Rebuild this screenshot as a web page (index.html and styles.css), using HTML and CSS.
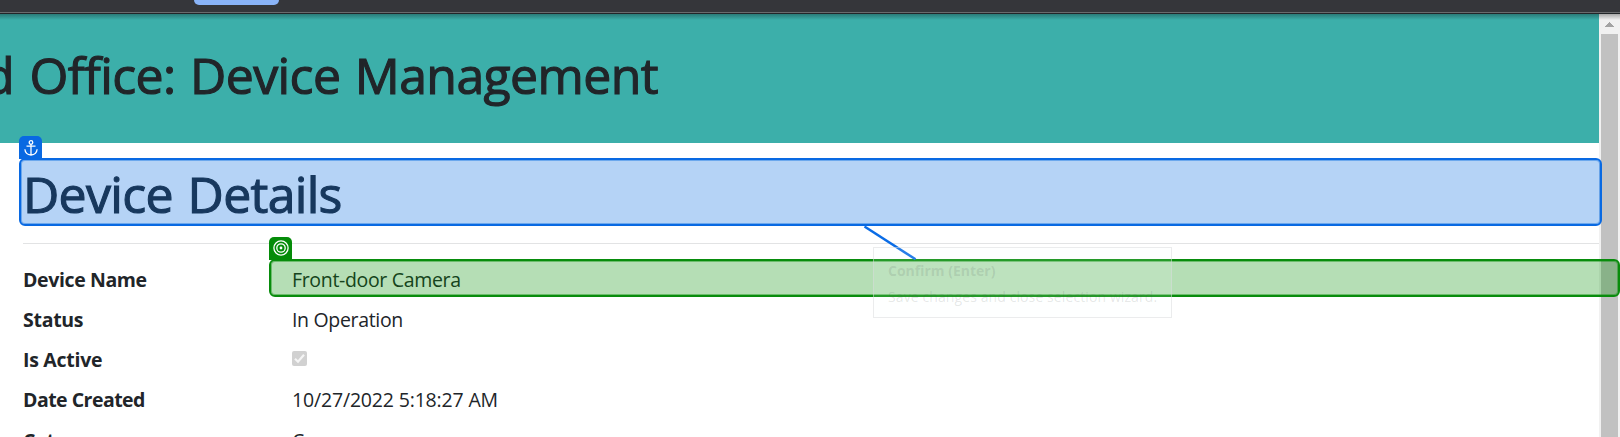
FILE: index.html
```
<!DOCTYPE html>
<html lang="en">
<head>
<meta charset="utf-8">
<title>Device Management</title>
<link rel="stylesheet" href="styles.css">
</head>
<body>
<div class="toolbar"><div class="toolbar-tab"></div></div>
<div class="viewport">
  <div class="page">
    <header class="banner"><h1 class="banner-title"><span class="banner-lead">d</span>Office: Device Management</h1></header>
    <main class="content">
      <h1 class="heading">Device Details</h1>
      <dl class="details">
        <dt>Device Name</dt><dd>Front-door Camera</dd>
        <dt class="short">Status</dt><dd>In Operation</dd>
        <dt class="short">Is Active</dt>
        <dd><svg class="check" viewBox="0 0 15 15"><rect width="15" height="15" rx="2" fill="#d1d1d1"/><path d="M3 7.7 6 10.7 12 3.8" fill="none" stroke="#f5f5f5" stroke-width="2.2"/></svg></dd>
        <dt class="date-label">Date Created</dt><dd class="date-value">10/27/2022 5:18:27 AM</dd>
        <dt class="last">Category</dt><dd class="last">Camera</dd>
      </dl>
    </main>
  </div>
  <div class="scrollbar">
    <svg class="scroll-arrow" viewBox="0 0 9 5" shape-rendering="crispEdges"><path d="M0 5 4.5 0 9 5Z" fill="#a3a3a3"/></svg>
    <div class="scroll-thumb"></div>
  </div>
</div>
<div class="toolbar-shadow"></div>
<div class="marker marker-anchor"></div>
<div class="badge badge-anchor">
  <svg class="anchor-icon" viewBox="0 0 14 16" fill="none" stroke="#fff" stroke-width="1.3"><circle cx="7" cy="2.5" r="1.8"/><path d="M7 4.3V15M2.5 6.1h9M.9 9.3C1.2 13 4 14.8 7 15c3-.2 5.8-2 6.1-5.7"/></svg>
</div>
<div class="marker marker-target"></div>
<div class="badge badge-target">
  <svg class="target-icon" viewBox="0 0 16 16" fill="none" stroke="#fff" stroke-width="1.3"><circle cx="8" cy="8" r="7.1"/><circle cx="8" cy="8" r="4.2"/><circle cx="8" cy="8" r="1.4" fill="#fff" stroke="none"/></svg>
</div>
<svg class="connector" viewBox="0 0 60 40"><path d="M4.500 3.500 55.500 36.300" stroke="#0a6ce6" stroke-width="2.500"/></svg>
<aside class="tooltip"><strong>Confirm (Enter)</strong><span class="tooltip-text">Save changes and close selection wizard.</span></aside>
</body>
</html>
```

FILE: styles.css
```
* { box-sizing: border-box; }
body {
  margin: 0;
  width: 1620px;
  height: 437px;
  overflow: hidden;
  position: relative;
  display: flex;
  flex-direction: column;
  background: #fff;
  color: #212529;
  font-family: "Open Sans", "Noto Sans", sans-serif;
}
h1, dl, dd { margin: 0; }
.toolbar {
  flex: none;
  height: 14px;
  padding-left: 194px;
  background: #35363a;
  border-bottom: 1px solid #222629;
  box-shadow: inset 0 -1px #6a6b6d;
}
.toolbar-tab { width: 85px; height: 5px; border-radius: 0 0 5px 5px; background: #8ab4f8; }
.toolbar-shadow {
  position: absolute;
  top: 14px;
  left: 0;
  width: 100%;
  height: 6px;
  background: linear-gradient(rgba(0,0,0,.3), rgba(0,0,0,0));
}
.viewport { flex: 1; min-height: 0; display: flex; }
.page { flex: 1; min-width: 0; overflow: hidden; }
.banner { height: 129px; padding-top: 27px; background: #3cafaa; overflow: hidden; }
.banner-title {
  margin-left: -16px;
  font-size: 50px;
  line-height: 68px;
  font-weight: 500;
  letter-spacing: -.6px;
  word-spacing: 2px;
  -webkit-text-stroke: 1.1px currentColor;
  white-space: nowrap;
}
.banner-lead { display: inline-block; width: 45.500px; }
.content { padding: 17px 0 0 23px; }
.heading {
  height: 84px;
  font-size: 50px;
  line-height: 68px;
  font-weight: 500;
  letter-spacing: -.7px;
  word-spacing: 2.500px;
  -webkit-text-stroke: 1.1px currentColor;
  border-bottom: 1px solid #e2e3e4;
}
.details {
  display: grid;
  grid-template-columns: 269px 1fr;
  grid-auto-rows: 40px;
  padding-top: 16px;
  font-size: 19.500px;
  line-height: 40px;
  white-space: nowrap;
}
.details dt { font-weight: 700; letter-spacing: -.38px; }
.details .short { letter-spacing: -.28px; }
.details .date-label { letter-spacing: -.52px; }
.details dd { letter-spacing: -.33px; }
.details .date-value { letter-spacing: -.17px; }
.details .last { padding-top: 1px; }
.check { display: block; width: 15px; height: 15px; margin-top: 11px; }
.scrollbar {
  width: 21px;
  padding: 8px 2px 0;
  background: #f1f1f1;
  display: flex;
  flex-direction: column;
  align-items: center;
}
.scroll-arrow { flex: none; width: 9px; height: 5px; margin-bottom: 7px; }
.scroll-thumb { flex: 1; width: 17px; background: #c1c1c1; }
.marker { position: absolute; border: 2px solid; border-radius: 6px; }
.marker-anchor {
  left: 19px;
  top: 158px;
  width: 1583px;
  height: 68px;
  border-color: #0969e2;
  background: rgba(0,104,224,.29);
  box-shadow: inset 0 0 0 1px rgba(0,104,224,.4);
}
.marker-target {
  left: 269px;
  top: 259px;
  width: 1351px;
  height: 38px;
  border-color: #088c0c;
  background: rgba(0,140,0,.29);
  box-shadow: inset 0 0 0 1px rgba(0,140,0,.4);
}
.badge {
  position: absolute;
  width: 23px;
  height: 23px;
  border-radius: 5px 5px 0 0;
  display: flex;
  align-items: center;
  justify-content: center;
}
.badge-anchor { left: 19px; top: 136px; background: #0969e2; }
.badge-target { left: 269px; top: 237px; background: #058c09; }
.anchor-icon { width: 14px; height: 16px; }
.target-icon { width: 16px; height: 16px; margin-bottom: 1px; }
.connector { position: absolute; left: 860px; top: 223px; width: 60px; height: 40px; }
.tooltip {
  position: absolute;
  left: 873px;
  top: 247px;
  width: 299px;
  height: 71px;
  padding: 10px 14px;
  display: flex;
  flex-direction: column;
  border: 1px solid rgba(215,218,220,.5);
  background: rgba(249,255,252,.12);
  color: rgba(70,80,78,.14);
  font-size: 14px;
  line-height: 26px;
  white-space: nowrap;
}
.tooltip-text { letter-spacing: .1px; }
```
